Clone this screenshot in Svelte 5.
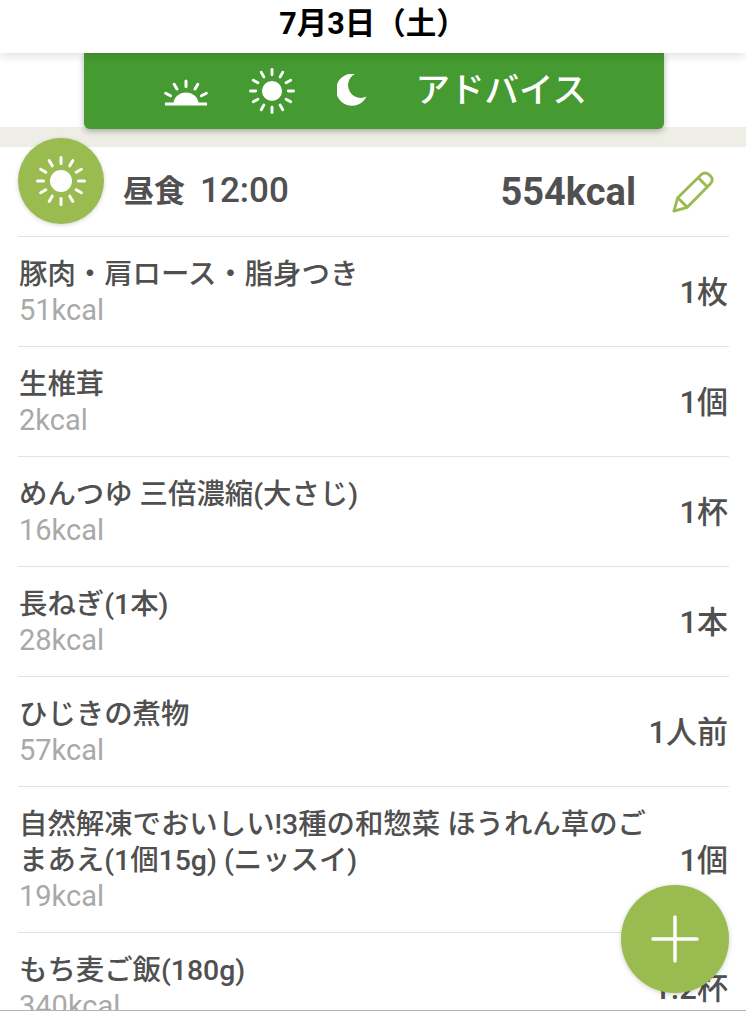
<script>
  const foods = [
    { name: "豚肉・肩ロース・脂身つき", kcal: 51, qty: "1枚" },
    { name: "生椎茸", kcal: 2, qty: "1個" },
    { name: "めんつゆ 三倍濃縮(大さじ)", kcal: 16, qty: "1杯" },
    { name: "長ねぎ(1本)", kcal: 28, qty: "1本" },
    { name: "ひじきの煮物", kcal: 57, qty: "1人前" },
    { name: "自然解凍でおいしい!3種の和惣菜 ほうれん草のごまあえ(1個15g) (ニッスイ)", kcal: 19, qty: "1個" },
    { name: "もち麦ご飯(180g)", kcal: 340, qty: "1.2杯" }
  ];

  const rays = [0, 30, 60, 90, 120, 150, 180, 210, 240, 270, 300, 330];
  const sunriseRays = [-62, -31, 0, 31, 62];
</script>

<div class="page">
  <header class="top">7月3日（土）</header>

  <div class="nav-area">
    <nav class="tabs">
      <svg class="tab-icon rise" viewBox="0 0 46 31" aria-hidden="true">
        {#each sunriseRays as r}
          <line x1="23" y1="5" x2="23" y2="10.500" transform="rotate({r} 23 28)" />
        {/each}
        <path class="fill" d="M10.500 28a12.500 11.500 0 0 1 25 0z" />
        <rect class="fill" x="2" y="26.500" width="42" height="3" />
      </svg>
      <svg class="tab-icon sun" viewBox="0 0 48 48" aria-hidden="true">
        <g>
          {#each rays as r}
            <line x1="24" y1="1.500" x2="24" y2="7" transform="rotate({r} 24 24)" />
          {/each}
        </g>
        <circle class="fill" cx="24" cy="24" r="10.500" />
      </svg>
      <svg class="tab-icon moon" viewBox="0 0 30 32" aria-hidden="true">
        <path class="fill" d="M18 0A16 16 0 1 0 29.500 22.500A12.500 12.500 0 0 1 18 0Z" />
      </svg>
      <span class="advice">アドバイス</span>
    </nav>
  </div>
  <div class="band"></div>

  <main class="content">
    <section class="meal-head">
      <div class="meal-badge">
        <svg viewBox="0 0 66 66" aria-hidden="true">
          {#each rays as r}
            <line x1="33" y1="9.500" x2="33" y2="15.500" transform="rotate({r} 33 33)" />
          {/each}
          <circle class="fill" cx="33" cy="33" r="11" />
        </svg>
      </div>
      <div class="meal-title"><b>昼食</b><span>12:00</span></div>
      <div class="meal-kcal">554kcal</div>
      <svg class="pencil" viewBox="0 0 44 44" aria-hidden="true">
        <path d="M2 42L6 28L31 3.500Q34.500 0.500 38.500 3.500L41 6Q43.500 9.500 40.500 13L16 38Z" />
        <path d="M6 28L16 38M27.500 7L37 16.500" />
      </svg>
    </section>

    <ul class="foods">
      {#each foods as food}
        <li class="food">
          <div class="food-main">
            <div class="food-name">{food.name}</div>
            <div class="food-kcal">{food.kcal}kcal</div>
          </div>
          <div class="food-qty">{food.qty}</div>
        </li>
      {/each}
    </ul>

    <button class="fab" aria-label="追加">
      <svg viewBox="0 0 48 48" aria-hidden="true">
        <path d="M24 2V46M2 24H46" />
      </svg>
    </button>
  </main>

  <div class="bottom"></div>
</div>

<style>
  :global(body) {
    margin: 0;
    background: #fff;
  }

  .page {
    height: 1016px;
    display: flex;
    flex-direction: column;
    overflow: hidden;
    font-family: Roboto, "Noto Sans CJK JP", sans-serif;
    color: #505050;
  }

  .top {
    position: relative;
    z-index: 2;
    height: 53px;
    flex: none;
    box-sizing: border-box;
    padding-top: 5px;
    text-align: center;
    font-size: 30.500px;
    line-height: 38px;
    font-weight: 700;
    color: #000;
    background: #fff;
    box-shadow: 0 2px 10px rgba(0, 0, 0, 0.14);
  }

  .nav-area {
    position: relative;
    z-index: 1;
    height: 74px;
    flex: none;
    display: flex;
    justify-content: center;
    padding-left: 1px;
  }

  .tabs {
    width: 580px;
    height: 76px;
    box-sizing: border-box;
    padding-left: 79px;
    display: flex;
    align-items: center;
    background: #459a31;
    border-radius: 0 0 6px 6px;
    box-shadow: 0 2px 6px rgba(0, 0, 0, 0.3);
    color: #fff;
  }

  .tab-icon line {
    stroke: #fff;
    stroke-width: 3;
    stroke-linecap: round;
  }

  .fill {
    fill: #fff;
  }

  .rise {
    width: 46px;
    height: 31px;
    margin-top: 1px;
  }

  .sun {
    width: 46px;
    height: 46px;
    margin-left: 40px;
    margin-top: -1px;
  }

  .moon {
    width: 30px;
    height: 32px;
    margin-left: 42px;
    margin-top: -2px;
  }

  .advice {
    margin-left: 49px;
    font-size: 34.500px;
    line-height: 40px;
    margin-top: -2px;
    font-weight: 500;
  }

  .band {
    height: 20px;
    flex: none;
    background: #eeede6;
  }

  .content {
    position: relative;
    flex: 1;
    min-height: 0;
    padding: 0 17px 0 18px;
  }

  .meal-head {
    display: flex;
    align-items: center;
    border-bottom: 1px solid #e2e2e2;
    box-sizing: border-box;
    height: 90px;
  }

  .meal-badge {
    position: relative;
    z-index: 1;
    width: 86px;
    height: 86px;
    flex: none;
    margin-top: -21px;
    border-radius: 50%;
    background: #99bb50;
    box-shadow: 0 1px 4px rgba(0, 0, 0, 0.18);
    display: flex;
    align-items: center;
    justify-content: center;
  }

  .meal-badge svg {
    width: 66px;
    height: 66px;
  }

  .meal-badge line {
    stroke: #fff;
    stroke-width: 3;
    stroke-linecap: round;
  }

  .meal-title {
    margin-left: 19px;
    display: flex;
    align-items: baseline;
    gap: 15px;
    font-size: 31px;
    line-height: 40px;
  }

  .meal-title b {
    font-weight: 700;
  }

  .meal-title span {
    font-size: 35px;
    font-weight: 500;
  }

  .meal-kcal {
    margin-left: auto;
    font-size: 38px;
    font-weight: 700;
    line-height: 40px;
  }

  .pencil {
    width: 42px;
    height: 42px;
    margin-left: 36px;
    margin-right: 15px;
    fill: none;
    stroke: #99bb50;
    stroke-width: 3;
    stroke-linejoin: round;
  }

  .foods {
    list-style: none;
    margin: 0;
    padding: 0;
  }

  .food {
    display: flex;
    align-items: center;
    justify-content: space-between;
    box-sizing: border-box;
    min-height: 110px;
    padding: 20px 0 19px 1px;
    border-bottom: 1px solid #e2e2e2;
  }

  .food-main {
    width: 628px;
  }

  .food-name {
    font-size: 28.400px;
    line-height: 36px;
    font-weight: 500;
  }

  .food-kcal {
    font-size: 29px;
    line-height: 34px;
    color: #a9a9a9;
  }

  .food-qty {
    flex: none;
    margin-top: 2px;
    font-size: 31px;
    line-height: 36px;
    font-weight: 500;
    white-space: nowrap;
    padding-right: 1px;
  }

  .fab {
    position: absolute;
    z-index: 1;
    right: 17px;
    top: 738px;
    width: 108px;
    height: 108px;
    padding: 0;
    border: none;
    border-radius: 50%;
    background: #99bb50;
    box-shadow: 0 1px 5px rgba(0, 0, 0, 0.2);
    display: flex;
    align-items: center;
    justify-content: center;
  }

  .fab svg {
    width: 48px;
    height: 48px;
    fill: none;
    stroke: #fff;
    stroke-width: 3.500;
    stroke-linecap: round;
  }

  .bottom {
    position: relative;
    z-index: 2;
    height: 5px;
    flex: none;
    background: #fff;
    border-top: 1px solid #b5b5b0;
  }
</style>
